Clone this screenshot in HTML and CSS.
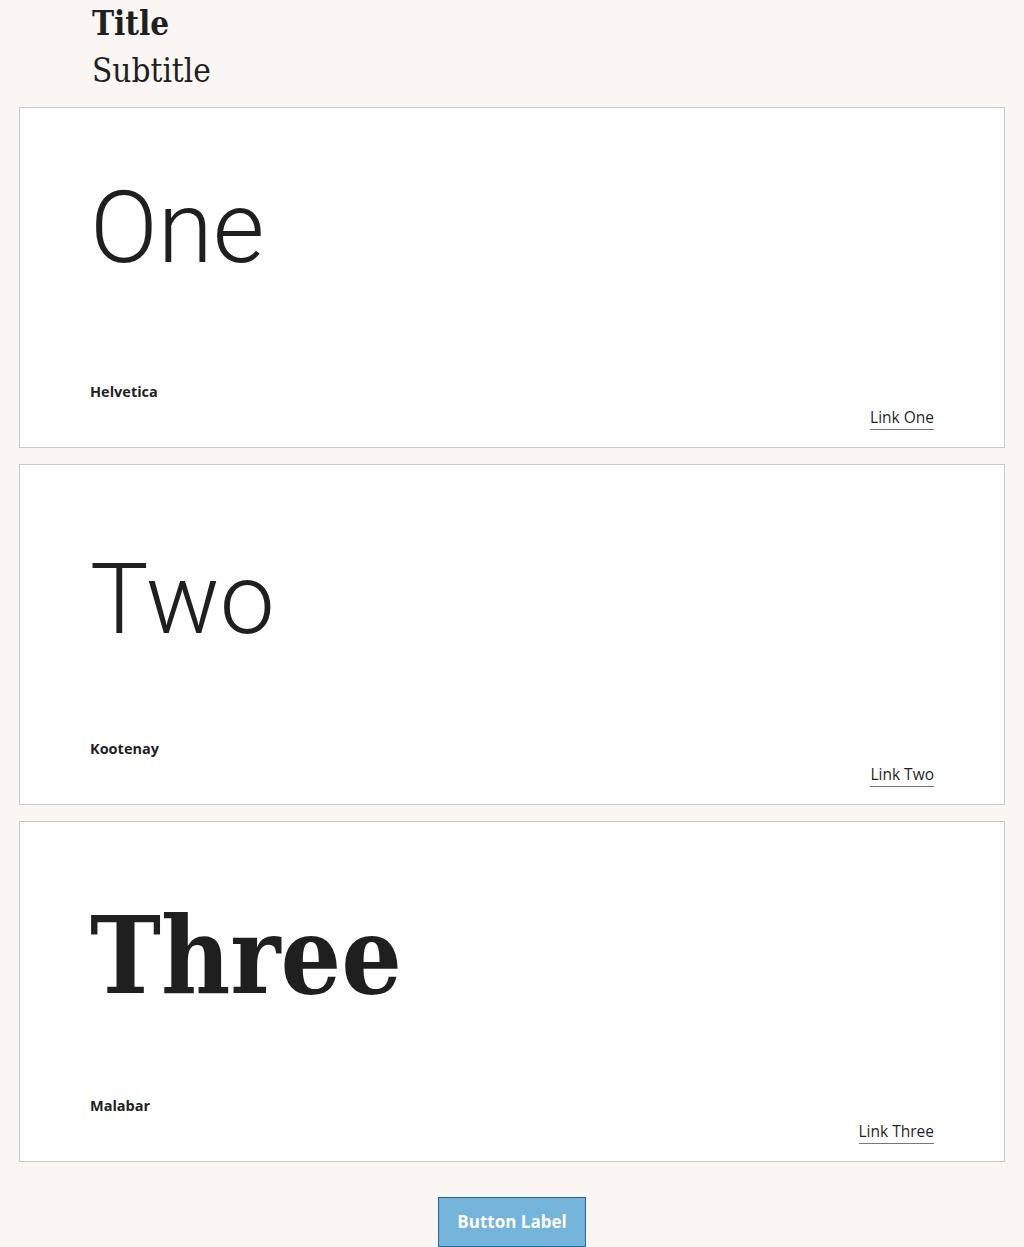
FILE: index.html
```html
<!DOCTYPE html>
<html lang="en">
<head>
<meta charset="utf-8">
<title>Fonts</title>
<link rel="stylesheet" href="styles.css">
</head>
<body>
<header class="header">
  <h1 class="title">Title</h1>
  <h2 class="subtitle">Subtitle</h2>
</header>
<main class="cards">
  <section class="card">
    <div class="sample sample-helvetica">One</div>
    <div class="label">Helvetica</div>
    <div class="link-row"><a class="link" href="#">Link One</a></div>
  </section>
  <section class="card">
    <div class="sample sample-kootenay">Two</div>
    <div class="label">Kootenay</div>
    <div class="link-row"><a class="link" href="#">Link Two</a></div>
  </section>
  <section class="card">
    <div class="sample sample-malabar">Three</div>
    <div class="label">Malabar</div>
    <div class="link-row"><a class="link" href="#">Link Three</a></div>
  </section>
</main>
<div class="actions">
  <button class="button" type="button">Button Label</button>
</div>
</body>
</html>
```

FILE: styles.css
```css
html, body {
  margin: 0;
  padding: 0;
  background: #faf6f3;
  color: #1f1f1f;
}

body {
  font-family: "Open Sans", "Noto Sans", sans-serif;
}

.header {
  padding: 0 0 0 92px;
  height: 107px;
  box-sizing: border-box;
}

.title {
  margin: 0;
  font-family: "DejaVu Serif", serif;
  font-stretch: condensed;
  font-weight: 700;
  font-size: 33px;
  line-height: 48px;
}

.subtitle {
  margin: 0;
  font-family: "DejaVu Serif", serif;
  font-stretch: condensed;
  font-weight: 400;
  font-size: 33px;
  line-height: 46px;
}

.cards {
  display: flex;
  flex-direction: column;
  gap: 16px;
  padding: 0 19px;
}

.card {
  box-sizing: border-box;
  height: 341px;
  background: #fff;
  border: 1px solid #c9c9c9;
  padding: 70px 70px 17px 70px;
  display: flex;
  flex-direction: column;
}

.sample {
  font-size: 100px;
  line-height: 100px;
  height: 100px;
  color: #1f1f1f;
}

.sample-helvetica,
.sample-kootenay {
  font-family: "Roboto", "Liberation Sans", sans-serif;
  font-weight: 300;
}

.sample-kootenay {
  margin-top: 15px;
  font-size: 98px;
}

.sample-malabar {
  font-family: "DejaVu Serif", serif;
  font-stretch: condensed;
  font-weight: 700;
  font-size: 106px;
  margin-top: 14px;
}

.label {
  margin-top: auto;
  font-size: 14.5px;
  line-height: 20px;
  font-weight: 700;
}

.link-row {
  display: flex;
  justify-content: flex-end;
  margin-top: 5px;
}

.link {
  font-size: 15.5px;
  line-height: 20px;
  color: #1f1f1f;
  text-decoration: none;
  padding-bottom: 2px;
  border-bottom: 1px solid #777;
}

.actions {
  display: flex;
  justify-content: center;
  padding-top: 35px;
}

.button {
  width: 148px;
  height: 50px;
  box-sizing: border-box;
  background: #74b3da;
  border: 1px solid #1d6a9b;
  border-radius: 0;
  color: #fff;
  font-family: "Open Sans", "Noto Sans", sans-serif;
  font-weight: 700;
  font-size: 17px;
  padding: 0 0 2px;
}
```
